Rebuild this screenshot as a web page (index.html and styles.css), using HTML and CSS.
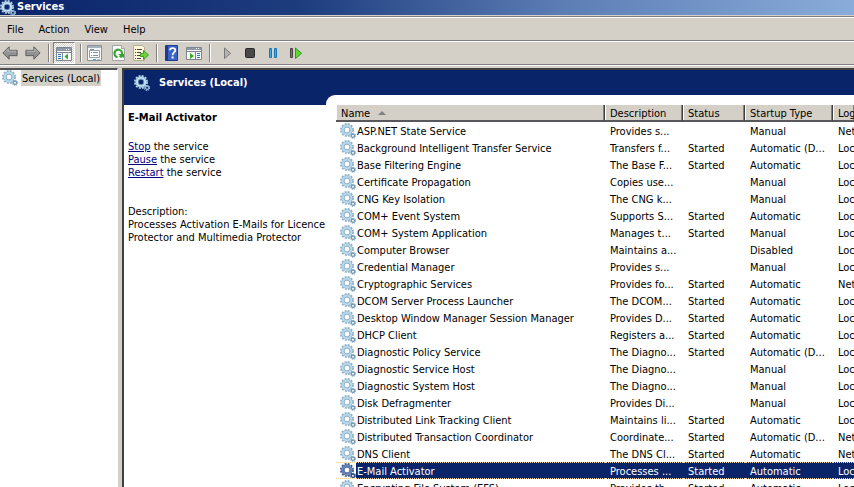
FILE: index.html
```html
<!DOCTYPE html>
<html lang="en">
<head>
    <meta charset="UTF-8">
    <meta name="viewport" content="width=device-width, initial-scale=1.0">
    <title>Services</title>
    <link rel="stylesheet" href="styles.css">
</head>
<body>
    <!-- shared gear icon -->
    <svg class="defs" width="0" height="0" aria-hidden="true">
        <symbol id="gear" viewBox="0 0 16 16">
            <circle class="teeth" cx="7" cy="7" r="6.1" fill="none" stroke-width="1.7" stroke-dasharray="2 1.194"/>
            <circle class="teeth" cx="7" cy="7" r="5.2" fill="none" stroke-width=".8"/>
            <circle class="ring" cx="7" cy="7" r="4.1" fill="none" stroke-width="2"/>
            <circle class="edge" cx="7" cy="7" r="2.9" fill="none" stroke-width=".8"/>
            <circle class="teeth" cx="13" cy="12.8" r="2.5" fill="none" stroke-width="1.2" stroke-dasharray="1.1 .86"/>
            <circle class="edge" cx="13" cy="12.8" r="1.6" fill="none" stroke-width="1.3"/>
        </symbol>
    </svg>

    <header class="titlebar">
        <svg class="gear on-dark"><use href="#gear"/></svg>
        <span>Services</span>
    </header>

    <nav class="menubar">
        <button>File</button>
        <button>Action</button>
        <button>View</button>
        <button>Help</button>
    </nav>

    <div class="toolbar">
        <button aria-label="Back">
            <svg width="16" height="16" viewBox="0 0 18 16"><path d="M1 8 8 1v4h9v6H8v4z" fill="#929292" stroke="#555"/><path d="M3 7.500 7 3.500v2.500h9" fill="none" stroke="#bbb"/></svg>
        </button>
        <button aria-label="Forward">
            <svg width="16" height="16" viewBox="0 0 18 16"><path d="M17 8 10 1v4H1v6h9v4z" fill="#929292" stroke="#555"/><path d="M2 6h9V3.500l4 4" fill="none" stroke="#bbb"/></svg>
        </button>
        <span class="sep"></span>
        <button class="pressed" aria-label="Show console tree">
            <svg width="16" height="16" viewBox="0 0 16 16"><path fill="#f6f8fa" stroke="#7c8590" d="M.5 1.500h15v13H.5z"/><path fill="#8e9aa8" d="M1 2h14v3H1z"/><path fill="#fff" d="M10 3h1v1h-1zM12 3h1v1h-1zM1 5h14v1H1z"/><path fill="#7c8590" d="M6 6h1v8H6zM1 6h14v1H1z"/><path fill="#2878c8" d="M2 8h3v1H2zM2 10h3v1H2zM2 12h3v1H2z"/><path fill="#2fae20" d="M12 7.500v6L8.500 10.500z"/></svg>
        </button>
        <span class="sep"></span>
        <button aria-label="Properties">
            <svg width="16" height="16" viewBox="0 0 16 16"><path fill="#f4f6f7" stroke="#88929c" d="M.5.5h14v15H.5z"/><path fill="#a7b1ba" d="M1 1h13v2H1z"/><path fill="#fff" stroke="#94a0aa" d="M2.500 5.500h10v7h-10z"/><path fill="#7793ac" d="M3 4h4v1H3zM4 7h1v1H4zM6 7h5v1H6zM4 10h1v1H4zM6 10h5v1H6z"/><path fill="#34b4dc" d="M6 14h3v1H6z"/><path fill="#b9c3cb" d="M10 14h3v1h-3z"/></svg>
        </button>
        <button aria-label="Refresh">
            <svg width="16" height="16" viewBox="0 0 16 16"><path fill="#fafafa" stroke="#a5a5a5" d="M2.500.5h9l3 3v12h-12z"/><path fill="#ddd" stroke="#a5a5a5" d="M11.500.5v3h3"/><path d="M7.500 12.200A3.800 3.800 0 1 1 12 9" fill="none" stroke="#2fa82b" stroke-width="2.200"/><path fill="#2fa82b" d="M8 9h6v4l-1.500-1-1.500 1-2-1.500 1-1z"/></svg>
        </button>
        <button aria-label="Export list">
            <svg width="16" height="16" viewBox="0 0 16 16"><path fill="#fbf7d8" stroke="#b3ad91" d="M.5.500h9l2 2v13h-11z"/><path fill="#444" d="M2 4h1v1H2zM4 4h5v1H4zM2 7h1v1H2zM4 7h4v1H4zM2 10h1v1H2zM4 10h3v1H4zM2 13h1v1H2zM4 13h4v1H4z"/><path fill="#6fd13d" stroke="#3c9e24" d="M7.500 8.500h3V5.500l5 4.500-5 4.500v-3h-3z"/></svg>
        </button>
        <span class="sep"></span>
        <button aria-label="Help">
            <svg width="16" height="16" viewBox="0 0 16 16"><path fill="#3c64c4" stroke="#203d91" d="M2.500.5h12v15h-12z"/><path fill="#1e3a88" d="M3 1h2v14H3z"/><path d="M7 5.200C7 2.500 12.300 2.300 12.300 5.200 12.300 7.500 9.600 7.400 9.600 10.200" fill="none" stroke="#fff" stroke-width="1.800"/><path fill="#fff" d="M8.600 11.500h2v2h-2z"/></svg>
        </button>
        <button aria-label="Show action pane">
            <svg width="16" height="16" viewBox="0 0 16 16"><path fill="#f6f8fa" stroke="#7c8590" d="M.5 2.500h15v12H.5z"/><path fill="#8e9aa8" d="M1 3h14v2H1z"/><path fill="#fff" d="M10 3h1v1h-1zM12 3h1v1h-1z"/><path fill="#7c8590" d="M1 6h14v1H1zM9 7h1v8H9z"/><path fill="#2878c8" d="M11 8h3v1h-3zM11 10h3v1h-3zM11 12h3v1h-3z"/><path fill="#2fae20" d="M4 8v6l4-3z"/></svg>
        </button>
        <span class="sep"></span>
        <div class="controls">
            <button aria-label="Start service">
                <svg width="16" height="16" viewBox="0 0 16 16"><path fill="#b4b4b4" stroke="#777" d="M5.500 3v10.500l6-5.200z"/></svg>
            </button>
            <button aria-label="Stop service">
                <svg width="16" height="16" viewBox="0 0 16 16"><rect x="3.500" y="3.500" width="9" height="9" rx="1" fill="#484848" stroke="#292929"/></svg>
            </button>
            <button aria-label="Pause service">
                <svg width="16" height="16" viewBox="0 0 16 16"><path fill="#39a9e8" stroke="#1878b8" d="M4.500 3.500h2v9h-2zM9.500 3.500h2v9h-2z"/></svg>
            </button>
            <button aria-label="Restart service">
                <svg width="16" height="16" viewBox="0 0 16 16"><path fill="#777" stroke="#444" d="M2.500 3.500h2v9h-2z"/><path fill="#5cdb2f" stroke="#2c9a1c" d="M7.500 3v10.500l6-5.200z"/></svg>
            </button>
        </div>
    </div>

    <main class="panes">
        <aside class="tree">
            <a href="#services" class="tree-item">
                <svg class="gear"><use href="#gear"/></svg>
                <span>Services (Local)</span>
            </a>
        </aside>

        <section class="content" id="services">
            <h1 class="banner">
                <svg class="gear on-dark"><use href="#gear"/></svg>
                Services (Local)
            </h1>
            <div class="split">
                <div class="details">
                    <h2>E-Mail Activator</h2>
                    <p><a href="#stop">Stop</a> the service<br>
                    <a href="#pause">Pause</a> the service<br>
                    <a href="#restart">Restart</a> the service</p>
                    <p class="description">Description:<br>
                    Processes Activation E-Mails for Licence Protector and Multimedia Protector</p>
                </div>
                <div class="list">
                    <table>
                        <colgroup>
                            <col class="col-name">
                            <col class="col-desc">
                            <col class="col-status">
                            <col class="col-startup">
                            <col>
                        </colgroup>
                        <thead>
                            <tr><th>Name <span class="sort"></span></th><th>Description</th><th>Status</th><th>Startup Type</th><th>Log</th></tr>
                        </thead>
                        <tbody>
                            <tr><td><svg class="gear"><use href="#gear"/></svg>ASP.NET State Service</td><td>Provides s...</td><td></td><td>Manual</td><td>Net</td></tr>
                            <tr><td><svg class="gear"><use href="#gear"/></svg>Background Intelligent Transfer Service</td><td>Transfers f...</td><td>Started</td><td>Automatic (D...</td><td>Loc</td></tr>
                            <tr><td><svg class="gear"><use href="#gear"/></svg>Base Filtering Engine</td><td>The Base F...</td><td>Started</td><td>Automatic</td><td>Loc</td></tr>
                            <tr><td><svg class="gear"><use href="#gear"/></svg>Certificate Propagation</td><td>Copies use...</td><td></td><td>Manual</td><td>Loc</td></tr>
                            <tr><td><svg class="gear"><use href="#gear"/></svg>CNG Key Isolation</td><td>The CNG k...</td><td></td><td>Manual</td><td>Loc</td></tr>
                            <tr><td><svg class="gear"><use href="#gear"/></svg>COM+ Event System</td><td>Supports S...</td><td>Started</td><td>Automatic</td><td>Loc</td></tr>
                            <tr><td><svg class="gear"><use href="#gear"/></svg>COM+ System Application</td><td>Manages t...</td><td>Started</td><td>Manual</td><td>Loc</td></tr>
                            <tr><td><svg class="gear"><use href="#gear"/></svg>Computer Browser</td><td>Maintains a...</td><td></td><td>Disabled</td><td>Loc</td></tr>
                            <tr><td><svg class="gear"><use href="#gear"/></svg>Credential Manager</td><td>Provides s...</td><td></td><td>Manual</td><td>Loc</td></tr>
                            <tr><td><svg class="gear"><use href="#gear"/></svg>Cryptographic Services</td><td>Provides fo...</td><td>Started</td><td>Automatic</td><td>Net</td></tr>
                            <tr><td><svg class="gear"><use href="#gear"/></svg>DCOM Server Process Launcher</td><td>The DCOM...</td><td>Started</td><td>Automatic</td><td>Loc</td></tr>
                            <tr><td><svg class="gear"><use href="#gear"/></svg>Desktop Window Manager Session Manager</td><td>Provides D...</td><td>Started</td><td>Automatic</td><td>Loc</td></tr>
                            <tr><td><svg class="gear"><use href="#gear"/></svg>DHCP Client</td><td>Registers a...</td><td>Started</td><td>Automatic</td><td>Loc</td></tr>
                            <tr><td><svg class="gear"><use href="#gear"/></svg>Diagnostic Policy Service</td><td>The Diagno...</td><td>Started</td><td>Automatic (D...</td><td>Loc</td></tr>
                            <tr><td><svg class="gear"><use href="#gear"/></svg>Diagnostic Service Host</td><td>The Diagno...</td><td></td><td>Manual</td><td>Loc</td></tr>
                            <tr><td><svg class="gear"><use href="#gear"/></svg>Diagnostic System Host</td><td>The Diagno...</td><td></td><td>Manual</td><td>Loc</td></tr>
                            <tr><td><svg class="gear"><use href="#gear"/></svg>Disk Defragmenter</td><td>Provides Di...</td><td></td><td>Manual</td><td>Loc</td></tr>
                            <tr><td><svg class="gear"><use href="#gear"/></svg>Distributed Link Tracking Client</td><td>Maintains li...</td><td>Started</td><td>Automatic</td><td>Loc</td></tr>
                            <tr><td><svg class="gear"><use href="#gear"/></svg>Distributed Transaction Coordinator</td><td>Coordinate...</td><td>Started</td><td>Automatic (D...</td><td>Net</td></tr>
                            <tr><td><svg class="gear"><use href="#gear"/></svg>DNS Client</td><td>The DNS Cl...</td><td>Started</td><td>Automatic</td><td>Net</td></tr>
                            <tr class="selected"><td><svg class="gear"><use href="#gear"/></svg>E-Mail Activator</td><td>Processes ...</td><td>Started</td><td>Automatic</td><td>Loc</td></tr>
                            <tr><td><svg class="gear"><use href="#gear"/></svg>Encrypting File System (EFS)</td><td>Provides th...</td><td>Started</td><td>Automatic</td><td>Loc</td></tr>
                        </tbody>
                    </table>
                </div>
            </div>
        </section>
    </main>
</body>
</html>
```
FILE: styles.css
```css
* {
    box-sizing: border-box;
}
body {
    margin: 0;
    height: 100vh;
    display: flex;
    flex-direction: column;
    overflow: hidden;
    background: #d4d0c8;
    color: #000;
    font-family: Tahoma, "DejaVu Sans Condensed", "DejaVu Sans", sans-serif;
    font-size: 11px;
    line-height: 13px;
}
button {
    padding: 0;
    border: none;
    background: none;
    font: inherit;
    color: inherit;
}
svg {
    display: block;
    flex: none;
}
.defs {
    position: absolute;
}

/* gear icon */
.gear {
    width: 16px;
    height: 16px;
}
.teeth {
    stroke: var(--teeth, #8db1c8);
}
.ring {
    stroke: var(--ring, #b4d9ec);
}
.edge {
    stroke: var(--edge, #7199b4);
}
.on-dark {
    --teeth: #b4d4ea;
    --ring: #c4e2f4;
    --edge: #8fb4d0;
}

/* title, menu and toolbar */
.titlebar {
    display: flex;
    align-items: center;
    gap: 1px;
    height: 15px;
    background: linear-gradient(to right, #0a246a, #1d3c7e 35%, #5d7db5 66%, #8aacda);
    color: #fff;
    font-weight: bold;
}
.titlebar span {
    padding-bottom: 3px;
}
.menubar {
    display: flex;
    gap: 15px;
    height: 25px;
    margin-top: 1px;
    padding: 1px 7px 0;
    border-top: 1px solid #808080;
    border-bottom: 1px solid #808080;
    box-shadow: inset 0 1px #fff;
}
.toolbar {
    display: flex;
    align-items: center;
    gap: 7px;
    height: 24px;
    padding-left: 2px;
    border-top: 1px solid #fff;
    border-bottom: 1px solid #808080;
}
.sep {
    width: 2px;
    height: 18px;
    margin-right: -2px;
    border-left: 1px solid #808080;
    border-right: 1px solid #fff;
}
.pressed {
    margin: 0 -2px;
    padding: 3px 2px 1px;
    border: 1px solid;
    border-color: #808080 #fff #fff #808080;
    background: repeating-conic-gradient(#fff 0 25%, #d4d0c8 0 50%) 0 0 / 2px 2px;
}
.controls {
    display: flex;
    gap: 7px;
    margin-left: 3px;
}

/* panes */
.panes {
    flex: 1;
    display: flex;
    gap: 4px;
    min-height: 0;
    padding-top: 2px;
    border-top: 1px solid #fff;
}
.tree {
    width: 118px;
    border-top: 2px solid #505050;
    border-right: 1px solid #fff;
    background: #fff;
}
.tree-item {
    display: flex;
    gap: 3px;
    padding-left: 2px;
    color: #000;
    text-decoration: none;
}
.tree-item span {
    height: 16px;
    padding: 2px 1px 0;
    background: #d4d0c8;
}
.content {
    flex: 1;
    display: flex;
    flex-direction: column;
    min-width: 0;
    border-top: 2px solid #404040;
    border-left: 2px solid #404040;
    background: #0a246a;
}
.banner {
    display: flex;
    align-items: center;
    gap: 9px;
    height: 25px;
    margin: 0;
    padding-left: 10px;
    color: #fff;
    font-size: 11px;
}
.split {
    flex: 1;
    display: flex;
    min-height: 0;
}
.details {
    width: 202px;
    margin-top: 10px;
    padding: 6px 0 6px 4px;
    background: #fff;
}
.details h2 {
    margin: 0 0 16px;
    font-size: 11px;
}
.details p {
    margin: 0;
}
.details .description {
    margin-top: 26px;
}
.details a {
    color: #000080;
}
.list {
    flex: 1;
    min-width: 0;
    padding: 10px 0 0 10px;
    overflow: hidden;
    border-top-left-radius: 9px;
    background: #fff;
}

/* services table */
table {
    width: 100%;
    table-layout: fixed;
    border-collapse: separate;
    border-spacing: 0;
}
.col-name {
    width: 269px;
}
.col-desc {
    width: 78px;
}
.col-status {
    width: 62px;
}
.col-startup {
    width: 88px;
}
th {
    height: 17px;
    padding: 2px 0 0 5px;
    border-right: 1px solid #404040;
    border-bottom: 2px solid #58585c;
    background: #d4d0c8;
    box-shadow: inset 1px 0 #fff, inset -1px 0 #808080;
    font-weight: normal;
    text-align: left;
    white-space: nowrap;
}
th:last-child {
    border-right: none;
}
.sort {
    display: inline-block;
    margin: 0 0 2px 5px;
    border: 4px solid transparent;
    border-top: none;
    border-bottom-color: #808080;
}
td {
    height: 17px;
    padding: 2px 0 0 5px;
    white-space: nowrap;
    overflow: hidden;
}
td:first-child {
    padding-left: 4px;
}
td .gear {
    float: left;
    margin: -2px 1px -3px 0;
}
.selected td {
    color: #fff;
    background: #0a246a;
    border-top: 1px dotted #f5db95;
    border-bottom: 1px dotted #f5db95;
}
.selected td:first-child {
    background: linear-gradient(to right, #fff 20px, #0a246a 20px);
}
.selected .gear {
    --teeth: #37588f;
    --ring: #5f84b8;
    --edge: #2c4980;
}
```
